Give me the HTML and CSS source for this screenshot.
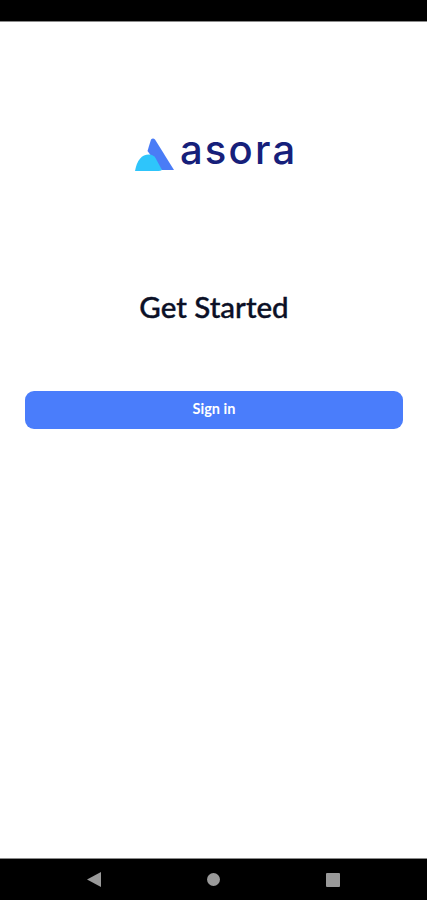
FILE: index.html
```html
<!DOCTYPE html>
<html lang="en">
<head>
  <meta charset="UTF-8">
  <title>Asora</title>
  <meta name="viewport" content="width=device-width, initial-scale=1.0">
  <link rel="stylesheet" href="styles.css">
</head>
<body>
  <div class="status-bar"></div>

  <div class="content">
    <div class="logo">
      <svg class="logo-mark" width="39" height="33" viewBox="0 0 39 33">
        <path d="M16 1.5 Q18 -0.5 20 1.5 L39 32 L26.5 32 L12.5 13 Z" fill="#4a7cf6"/>
        <path d="M0 33 Q3 16.5 14 16.5 Q18.5 16.5 20.5 20 L27 32 Q25.5 33 23.5 33 Z" fill="#2ec5fb"/>
      </svg>
      <span class="logo-name">asora</span>
    </div>

    <h1 class="title">Get Started</h1>

    <button class="button">Sign in</button>
  </div>

  <div class="nav-bar">
    <svg width="14" height="15" viewBox="0 0 14 15"><path d="M0 7.5 L14 0 L14 15 Z" fill="#9a9a9a"/></svg>
    <svg width="13" height="13" viewBox="0 0 13 13"><circle cx="6.5" cy="6.5" r="6.5" fill="#9a9a9a"/></svg>
    <svg width="14" height="14" viewBox="0 0 14 14"><rect width="14" height="14" rx="1" fill="#9a9a9a"/></svg>
  </div>
</body>
</html>
```

FILE: styles.css
```css
body {
  margin: 0;
  height: 900px;
  display: flex;
  flex-direction: column;
  background: #ffffff;
  font-family: 'Lato', sans-serif;
}
.status-bar {
  height: 21px;
  background: #000000;
  border-bottom: 1px solid #8a8a8a;
}
.content {
  flex: 1;
  display: flex;
  flex-direction: column;
  align-items: center;
  padding: 116px 24px 0 25px;
}
.logo {
  display: flex;
  align-items: flex-end;
  gap: 6px;
  height: 33px;
  margin-left: 2px;
}
.logo-name {
  font-family: 'Inter', sans-serif;
  font-size: 40px;
  line-height: 33px;
  font-weight: 500;
  letter-spacing: 2.2px;
  margin-right: -2.2px;
  padding-bottom: 5px;
  color: #16207a;
}
.title {
  margin: 118px 0 0;
  font-size: 29.5px;
  line-height: 36px;
  font-weight: 500;
  color: #0b1026;
  -webkit-text-stroke: 0.4px #0b1026;
}
.button {
  margin-top: 66px;
  width: 100%;
  height: 38px;
  background-color: #4a7dfb;
  color: white;
  border: none;
  border-radius: 9px;
  padding: 0 0 3px;
  font-family: 'Lato', sans-serif;
  font-size: 14.5px;
  font-weight: 700;
}
.nav-bar {
  height: 41px;
  background: #000000;
  border-top: 1px solid #8a8a8a;
  display: flex;
  justify-content: space-between;
  align-items: center;
  padding: 0 87px;
}
```
